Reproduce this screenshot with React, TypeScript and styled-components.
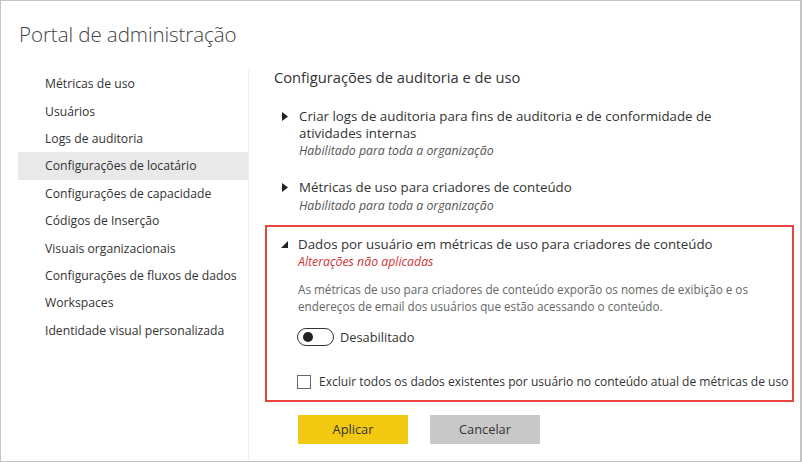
import React from "react";
import styled, { createGlobalStyle } from "styled-components";

const Global = createGlobalStyle`
  html, body { margin: 0; padding: 0; background: #fff; }
  body { font-family: "Open Sans", "Noto Sans", sans-serif; color: #333; }
  * { box-sizing: border-box; }
`;

const Frame = styled.div`
  width: 802px;
  height: 462px;
  border: 1px solid #c4c4c4;
  border-right-width: 2px;
  display: flex;
  flex-direction: column;
  overflow: hidden;
  background: #fff;
`;

const Title = styled.h1`
  margin: 0;
  padding: 18px 0 0 18px;
  height: 69px;
  font-size: 20.6px;
  font-weight: 300;
  color: #444;
  line-height: 30px;
  letter-spacing: -0.1px;
`;

const Body = styled.div`
  flex: 1;
  display: flex;
  min-width: 0;
`;

const Sidebar = styled.nav`
  flex: none;
  width: 248px;
  border-right: 1px solid #ececec;
  padding-left: 17px;
  display: flex;
  flex-direction: column;
`;

const NavItem = styled.div<{ $active?: boolean }>`
  height: 27.4px;
  display: flex;
  align-items: center;
  padding-left: 27px;
  font-size: 12.2px;
  color: #333;
  background: ${(p) => (p.$active ? "#e9e9e9" : "transparent")};
`;

const Main = styled.main`
  flex: 1;
  min-width: 0;
  padding: 0 6px 0 25px;
  display: flex;
  flex-direction: column;
`;

const Heading = styled.h2`
  margin: -4px 0 0;
  font-size: 14.7px;
  font-weight: 400;
  line-height: 22px;
  color: #333;
`;

const Setting = styled.div<{ $mt?: number; $pl?: number }>`
  margin-top: ${(p) => p.$mt ?? 0}px;
  display: flex;
  padding-left: ${(p) => p.$pl ?? 8}px;
`;

const Arrow = styled.div`
  width: 17px;
  flex: none;
  height: 17px;
  display: flex;
  align-items: center;
`;

const SettingText = styled.div`
  display: flex;
  flex-direction: column;
`;

const SettingTitle = styled.div`
  font-size: 13.3px;
  line-height: 16.5px;
  color: #333;
`;

const Sub = styled.div<{ $red?: boolean }>`
  font-size: 12.3px;
  font-style: italic;
  line-height: 18px;
  margin-top: 1px;
  color: ${(p) => (p.$red ? "#d13438" : "#555")};
`;

const Highlight = styled.section`
  margin: 10px 0 0 -9px;
  border: 2px solid #e8453f;
  height: 177px;
  padding-top: 9px;
  display: flex;
  flex-direction: column;
`;

const Description = styled.p`
  margin: 10px 0 0 31px;
  font-size: 11.7px;
  line-height: 17px;
  color: #666;
`;

const ToggleRow = styled.label`
  margin: 13px 0 0 30px;
  display: flex;
  align-items: center;
  gap: 6px;
  font-size: 12.8px;
  color: #333;
`;

const Toggle = styled.span`
  width: 37px;
  height: 18px;
  border: 1px solid #333;
  border-radius: 9px;
  display: flex;
  align-items: center;
  padding-left: 5px;
`;

const Knob = styled.span`
  width: 10px;
  height: 10px;
  border-radius: 50%;
  background: #222;
`;

const CheckRow = styled.label`
  margin: 27px 0 0 30px;
  display: flex;
  align-items: center;
  gap: 8px;
  font-size: 12.05px;
  color: #333;
  white-space: nowrap;
`;

const Box = styled.span`
  flex: none;
  width: 14px;
  height: 14px;
  border: 1px solid #666;
  background: #fff;
`;

const Buttons = styled.div`
  margin: 13px 0 0 24px;
  display: flex;
  gap: 22px;
`;

const Button = styled.button<{ $primary?: boolean }>`
  width: 110px;
  height: 29px;
  border: none;
  font-family: inherit;
  font-size: 12.8px;
  color: #333;
  background: ${(p) => (p.$primary ? "#f2c811" : "#c8c8c8")};
  padding: 0;
`;

const RightTri = () => (
  <svg width="6" height="9" viewBox="0 0 6 9">
    <path d="M0 0 L6 4.5 L0 9 Z" fill="#222" />
  </svg>
);

const DownTri = () => (
  <svg width="7" height="7" viewBox="0 0 7 7">
    <path d="M7 0 L7 7 L0 7 Z" fill="#222" />
  </svg>
);

const nav = [
  "Métricas de uso",
  "Usuários",
  "Logs de auditoria",
  "Configurações de locatário",
  "Configurações de capacidade",
  "Códigos de Inserção",
  "Visuais organizacionais",
  "Configurações de fluxos de dados",
  "Workspaces",
  "Identidade visual personalizada",
];

export default function App() {
  return (
    <>
      <Global />
      <Frame>
        <Title>Portal de administração</Title>
        <Body>
          <Sidebar>
            {nav.map((n, i) => (
              <NavItem key={n} $active={i === 3}>
                {n}
              </NavItem>
            ))}
          </Sidebar>
          <Main>
            <Heading>Configurações de auditoria e de uso</Heading>
            <Setting $mt={20}>
              <Arrow>
                <RightTri />
              </Arrow>
              <SettingText>
                <SettingTitle>
                  Criar logs de auditoria para fins de auditoria e de conformidade de
                  <br />
                  atividades internas
                </SettingTitle>
                <Sub>Habilitado para toda a organização</Sub>
              </SettingText>
            </Setting>
            <Setting $mt={19}>
              <Arrow>
                <RightTri />
              </Arrow>
              <SettingText>
                <SettingTitle>Métricas de uso para criadores de conteúdo</SettingTitle>
                <Sub>Habilitado para toda a organização</Sub>
              </SettingText>
            </Setting>
            <Highlight>
              <Setting $pl={14}>
                <Arrow>
                  <DownTri />
                </Arrow>
                <SettingText>
                  <SettingTitle>
                    Dados por usuário em métricas de uso para criadores de conteúdo
                  </SettingTitle>
                  <Sub $red>Alterações não aplicadas</Sub>
                </SettingText>
              </Setting>
              <Description>
                As métricas de uso para criadores de conteúdo exporão os nomes de exibição e os
                <br />
                endereços de email dos usuários que estão acessando o conteúdo.
              </Description>
              <ToggleRow>
                <Toggle>
                  <Knob />
                </Toggle>
                Desabilitado
              </ToggleRow>
              <CheckRow>
                <Box />
                Excluir todos os dados existentes por usuário no conteúdo atual de métricas de uso
              </CheckRow>
            </Highlight>
            <Buttons>
              <Button $primary>Aplicar</Button>
              <Button>Cancelar</Button>
            </Buttons>
          </Main>
        </Body>
      </Frame>
    </>
  );
}
